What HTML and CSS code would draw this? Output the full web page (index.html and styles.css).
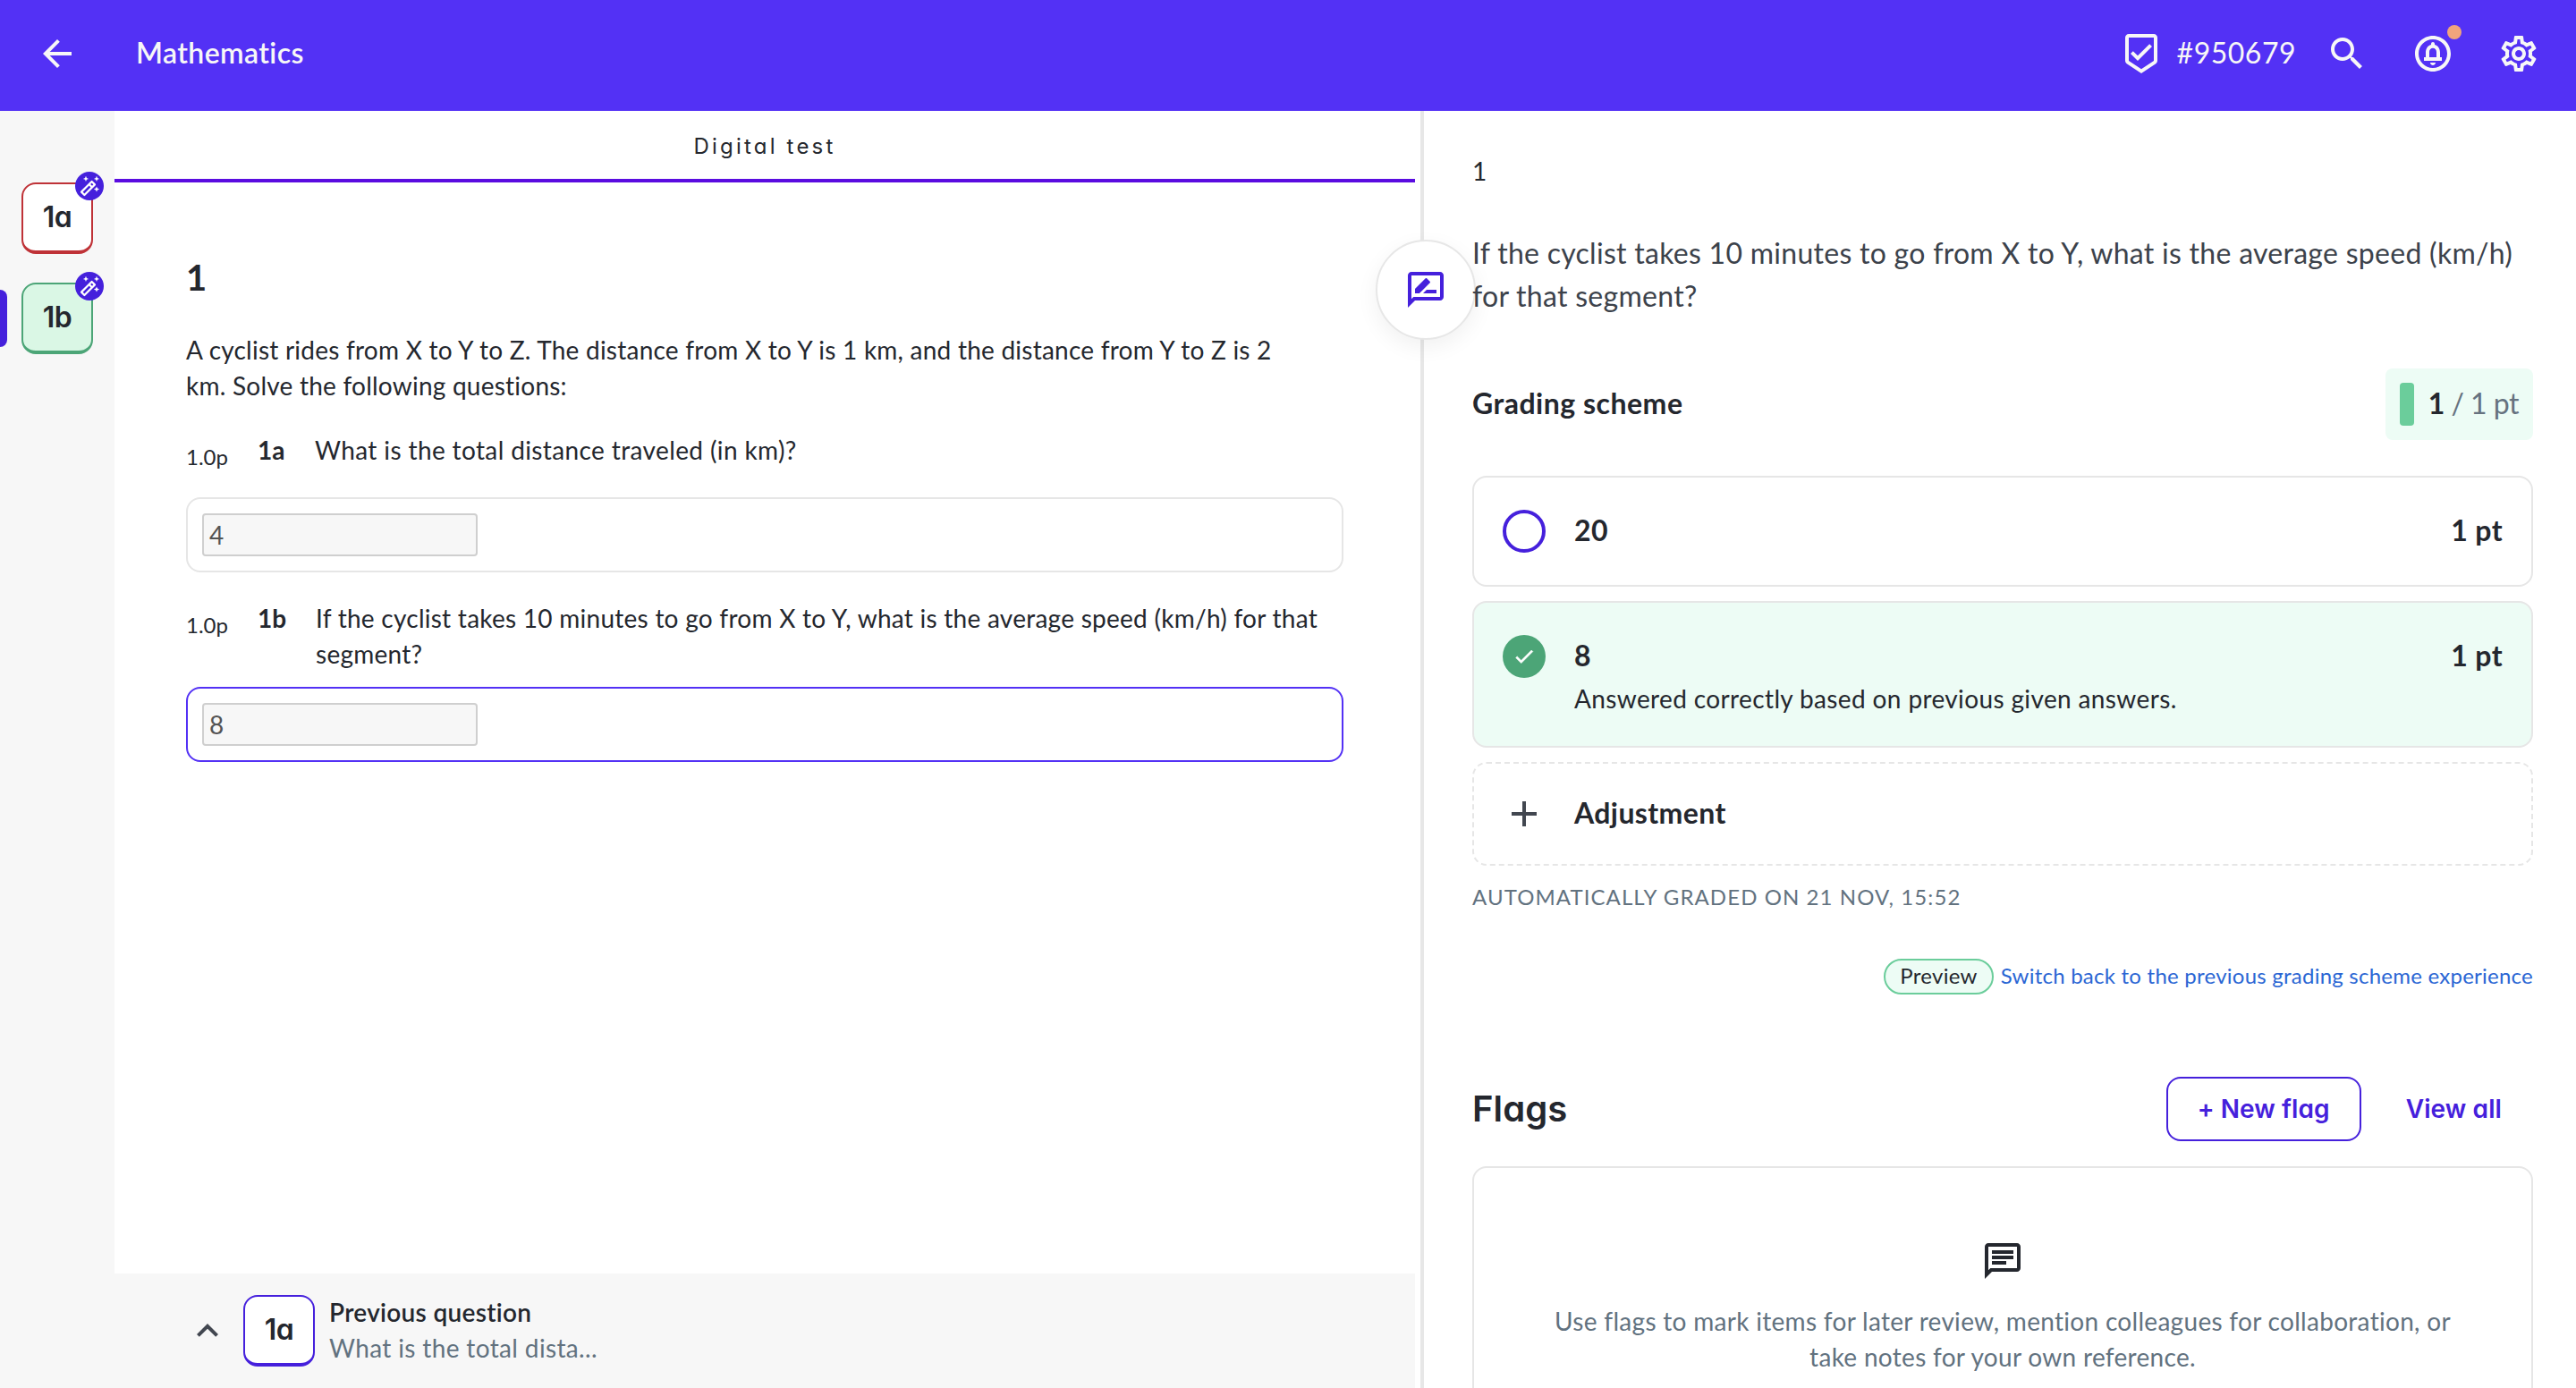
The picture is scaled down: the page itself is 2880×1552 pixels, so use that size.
FILE: index.html
```html
<!DOCTYPE html>
<html lang="en">
  <head>
    <title>Mathematics</title>
    <meta charset="utf-8">
    <link rel="stylesheet" href="styles.css">
  </head>
  <body>

  <svg class="sprite">
    <symbol id="wand" viewBox="0 0 32 32">
      <path fill="none" stroke="#fff" stroke-width="2.2" stroke-linejoin="round" d="M7 22.6 18.6 11l3.4 3.4L10.4 26zM15.6 14l3.4 3.4"/>
      <path fill="#fff" d="M12 4.8l.9 2.2 2.2.9-2.2.9-.9 2.2-.9-2.2-2.2-.9 2.2-.9zM24 4.8l.9 2.2 2.2.9-2.2.9-.9 2.2-.9-2.2-2.2-.9 2.2-.9zM24 16.4l.9 2.2 2.2.9-2.2.9-.9 2.2-.9-2.2-2.2-.9 2.2-.9z"/>
    </symbol>
  </svg>

  <header class="topbar">
    <svg class="icon" viewBox="0 0 24 24"><path d="M20 11H7.83l5.59-5.59L12 4l-8 8 8 8 1.41-1.41L7.83 13H20v-2z"/></svg>
    <div class="topbar-title">Mathematics</div>
    <div class="topbar-actions">
      <div class="student">
        <svg class="icon" viewBox="0 0 24 24"><path d="M19 1H5c-1.1 0-1.99.9-1.99 2L3 15.93c0 .69.35 1.3.88 1.66L12 23l8.11-5.41c.53-.36.88-.97.88-1.66L21 3c0-1.1-.9-2-2-2zm0 15-7 4.67L5 16V3h14v13zM10 13.17 7.41 10.59 6 12l4 4 8-8-1.42-1.42z"/></svg>
        <span>#950679</span>
      </div>
      <svg class="icon" viewBox="0 0 24 24"><path d="M15.5 14h-.79l-.28-.27C15.41 12.59 16 11.11 16 9.5 16 5.91 13.09 3 9.5 3S3 5.91 3 9.5 5.91 16 9.5 16c1.61 0 3.09-.59 4.23-1.57l.27.28v.79l5 4.99L20.49 19l-4.99-5zm-6 0C7.01 14 5 11.99 5 9.5S7.01 5 9.5 5 14 7.01 14 9.5 11.99 14 9.5 14z"/></svg>
      <div class="bell">
        <svg class="icon" viewBox="0 0 24 24"><path d="M12 18.5c.83 0 1.5-.67 1.5-1.5h-3c0 .83.67 1.5 1.5 1.5zM12 2C6.48 2 2 6.48 2 12s4.48 10 10 10 10-4.48 10-10S17.52 2 12 2zm0 18c-4.41 0-8-3.59-8-8s3.59-8 8-8 8 3.59 8 8-3.59 8-8 8zM16 11.39c0-2.11-1.03-3.92-3-4.39v-.5c0-.57-.43-1-1-1s-1 .43-1 1V7c-1.97.47-3 2.27-3 4.39V14H7v2h10v-2h-1v-2.61zM14 14h-4v-3c0-1.1.9-2.1 2-2.1s2 1 2 2.1v3z"/></svg>
        <span class="bell-dot"></span>
      </div>
      <svg class="icon" viewBox="0 0 24 24"><path d="M19.43 12.98c.04-.32.07-.64.07-.98 0-.34-.03-.66-.07-.98l2.11-1.65c.19-.15.24-.42.12-.64l-2-3.46c-.09-.16-.26-.25-.44-.25-.06 0-.12.01-.17.03l-2.49 1c-.52-.4-1.08-.73-1.69-.98l-.38-2.65C14.46 2.18 14.25 2 14 2h-4c-.25 0-.46.18-.49.42l-.38 2.65c-.61.25-1.17.59-1.69.98l-2.49-1c-.06-.02-.12-.03-.18-.03-.17 0-.34.09-.43.25l-2 3.46c-.13.22-.07.49.12.64l2.11 1.65c-.04.32-.07.65-.07.98 0 .33.03.66.07.98l-2.11 1.65c-.19.15-.24.42-.12.64l2 3.46c.09.16.26.25.44.25.06 0 .12-.01.17-.03l2.49-1c.52.4 1.08.73 1.69.98l.38 2.65c.03.24.24.42.49.42h4c.25 0 .46-.18.49-.42l.38-2.65c.61-.25 1.17-.59 1.69-.98l2.49 1c.06.02.12.03.18.03.17 0 .34-.09.43-.25l2-3.46c.12-.22.07-.49-.12-.64l-2.11-1.65zm-1.98-1.71c.04.31.05.52.05.73 0 .21-.02.43-.05.73l-.14 1.13.89.7 1.08.84-.7 1.21-1.27-.51-1.04-.42-.9.68c-.43.32-.84.56-1.25.73l-1.06.43-.16 1.13-.2 1.35h-1.4l-.19-1.35-.16-1.13-1.06-.43c-.43-.18-.83-.41-1.23-.71l-.91-.7-1.06.43-1.27.51-.7-1.21 1.08-.84.89-.7-.14-1.13c-.03-.31-.05-.54-.05-.74s.02-.43.05-.73l.14-1.13-.89-.7-1.08-.84.7-1.21 1.27.51 1.04.42.9-.68c.43-.32.84-.56 1.25-.73l1.06-.43.16-1.13.2-1.35h1.39l.19 1.35.16 1.13 1.06.43c.43.18.83.41 1.23.71l.91.7 1.06-.43 1.27-.51.7 1.21-1.07.85-.89.7.14 1.13zM12 8c-2.21 0-4 1.79-4 4s1.79 4 4 4 4-1.79 4-4-1.79-4-4-4zm0 6c-1.1 0-2-.9-2-2s.9-2 2-2 2 .9 2 2-.9 2-2 2z"/></svg>
    </div>
  </header>

  <div class="layout">
    <nav class="sidebar">
      <div class="nav-item">
        <div class="tile wrong">1a</div>
        <svg class="badge"><use href="#wand"/></svg>
      </div>
      <div class="nav-item active">
        <div class="tile correct">1b</div>
        <svg class="badge"><use href="#wand"/></svg>
      </div>
    </nav>

    <main class="test">
      <div class="tab">Digital test</div>
      <div class="exam">
        <h1>1</h1>
        <p class="intro">A cyclist rides from X to Y to Z. The distance from X to Y is 1 km, and the distance from Y to Z is 2 km. Solve the following questions:</p>

        <div class="question">
          <span class="points">1.0p</span>
          <b class="label">1a</b>
          <p class="text">What is the total distance traveled (in km)?</p>
        </div>
        <div class="answer first">
          <div class="field">4</div>
        </div>

        <div class="question second">
          <span class="points">1.0p</span>
          <b class="label">1b</b>
          <p class="text">If the cyclist takes 10 minutes to go from X to Y, what is the average speed (km/h) for that segment?</p>
        </div>
        <div class="answer current">
          <div class="field">8</div>
        </div>
      </div>

      <footer class="previous">
        <svg class="icon" viewBox="0 0 24 24"><path d="m12 8-6 6 1.41 1.41L12 10.83l4.59 4.58L18 14z"/></svg>
        <div class="tile">1a</div>
        <div>
          <div class="previous-title">Previous question</div>
          <div class="previous-text">What is the total dista...</div>
        </div>
      </footer>
    </main>

    <aside class="grading">
      <div class="feedback">
        <svg class="icon" viewBox="0 0 24 24"><path d="M20 2H4c-1.1 0-2 .9-2 2v18l4-4h14c1.1 0 2-.9 2-2V4c0-1.1-.9-2-2-2zm0 14H5.17L4 17.17V4h16v12zM10.5 14H18v-2h-5.5l-2 2zM6 14h2.47l5.88-5.88c.2-.2.2-.51 0-.71l-1.77-1.77c-.2-.2-.51-.2-.71 0L6 11.53V14z"/></svg>
      </div>

      <p class="number">1</p>
      <p class="prompt">If the cyclist takes 10 minutes to go from X to Y, what is the average speed (km/h) for that segment?</p>

      <div class="scheme-head">
        <h2>Grading scheme</h2>
        <div class="score"><span class="bar"></span><span><b>1</b> / 1 pt</span></div>
      </div>

      <div class="options">
        <div class="option">
          <span class="radio"></span>
          <div class="option-title">20</div>
          <div class="option-points">1 pt</div>
        </div>
        <div class="option selected">
          <span class="check">
            <svg viewBox="0 0 24 24"><path d="M9 16.17 4.83 12l-1.42 1.41L9 19 21 7l-1.41-1.41z"/></svg>
          </span>
          <div class="option-title">8
            <div class="option-note">Answered correctly based on previous given answers.</div>
          </div>
          <div class="option-points">1 pt</div>
        </div>
        <div class="option adjustment">
          <svg class="icon" viewBox="0 0 24 24"><path d="M19 13h-6v6h-2v-6H5v-2h6V5h2v6h6v2z"/></svg>
          <div class="option-title">Adjustment</div>
        </div>
      </div>

      <p class="graded">AUTOMATICALLY GRADED ON 21 NOV, 15:52</p>

      <div class="switch">
        <span class="pill">Preview</span>
        <a href="#">Switch back to the previous grading scheme experience</a>
      </div>

      <div class="flags-head">
        <h3>Flags</h3>
        <button class="btn outlined">+ New flag</button>
        <button class="btn">View all</button>
      </div>
      <div class="flags">
        <svg class="icon" viewBox="0 0 24 24"><path d="M4 4h16v12H5.17L4 17.17V4m0-2c-1.1 0-1.99.9-1.99 2L2 22l4-4h14c1.1 0 2-.9 2-2V4c0-1.1-.9-2-2-2H4zm2 10h8v2H6v-2zm0-3h12v2H6V9zm0-3h12v2H6V6z"/></svg>
        <p>Use flags to mark items for later review, mention colleagues for collaboration, or take notes for your own reference.</p>
      </div>
    </aside>
  </div>

  </body>
</html>
```
FILE: styles.css
```css
* {
  box-sizing: border-box;
}
html, body {
  height: 100%;
}
body {
  margin: 0;
  display: flex;
  flex-direction: column;
  overflow: hidden;
  background: #fff;
  color: #24272e;
  font: 28px/40px Lato, sans-serif;
  letter-spacing: 0.3px;
}
h1, h2, h3, p {
  margin: 0;
}
.sprite {
  display: none;
}
.icon {
  width: 48px;
  height: 48px;
  flex: none;
  fill: currentColor;
}

/* top bar */
.topbar {
  height: 124px;
  flex: none;
  padding: 0 40px 4px;
  display: flex;
  align-items: center;
  background: #5331f5;
  color: #f7f7f7;
  font-size: 32px;
}
.topbar-title {
  margin-left: 64px;
  padding-bottom: 2px;
  font-weight: 600;
  letter-spacing: 0.4px;
}
.topbar-actions {
  margin-left: auto;
  display: flex;
  gap: 48px;
}
.student {
  display: flex;
  align-items: center;
  gap: 16px;
  margin-right: -15px;
}
.student span {
  padding-bottom: 2px;
  letter-spacing: 0.5px;
}
.bell {
  position: relative;
  height: 48px;
}
.bell-dot {
  position: absolute;
  top: -8px;
  right: -8px;
  width: 16px;
  height: 16px;
  border-radius: 50%;
  background: #f1a47c;
}

.layout {
  flex: 1;
  min-height: 0;
  display: flex;
}

/* question navigation */
.sidebar {
  width: 128px;
  flex: none;
  padding: 80px 24px 0;
  display: flex;
  flex-direction: column;
  gap: 32px;
  background: #f7f7f7;
}
.nav-item {
  position: relative;
}
.tile {
  width: 80px;
  height: 80px;
  flex: none;
  border: 2px solid #4520dc;
  border-bottom-width: 4px;
  border-radius: 16px;
  background: #fff;
  font: 600 32px/74px Inter, sans-serif;
  font-feature-settings: "cv11";
  letter-spacing: -0.6px;
  text-align: center;
}
.tile.wrong {
  border-color: #bf3237;
}
.tile.correct {
  border-color: #4ca577;
  background: #daf7e5;
}
.badge {
  position: absolute;
  top: -12px;
  right: -12px;
  width: 32px;
  height: 32px;
  border-radius: 50%;
  background: #4520dc;
}
.nav-item.active::before {
  content: "";
  position: absolute;
  left: -24px;
  top: 8px;
  width: 8px;
  height: 64px;
  border-radius: 0 8px 8px 0;
  background: #4520dc;
}

/* test */
.test {
  width: 1454px;
  flex: none;
  display: flex;
  flex-direction: column;
}
.tab {
  height: 80px;
  border-bottom: 4px solid #5a0ce0;
  padding-top: 20px;
  text-align: center;
  font: 400 24px/40px Inter, sans-serif;
  font-feature-settings: "cv11";
  letter-spacing: 3.2px;
}
.exam {
  flex: 1;
  padding: 78px 80px 0;
}
h1 {
  font-size: 40px;
  line-height: 56px;
}
.intro {
  max-width: 1250px;
  margin-top: 33px;
  letter-spacing: 0.23px;
}
.question {
  display: flex;
  margin-top: 32px;
}
.question.second {
  margin-top: 31px;
}
.points {
  width: 80px;
  flex: none;
  padding-top: 12px;
  font-size: 24px;
  line-height: 32px;
  height: 40px;
  letter-spacing: 0;
}
.label {
  width: 64px;
  flex: none;
  letter-spacing: 0;
}
.text {
  letter-spacing: 0.38px;
}
.second .text {
  padding-left: 1px;
  letter-spacing: 0.26px;
}
.answer {
  height: 84px;
  margin-top: 17px;
  padding: 16px;
  border: 2px solid #e6e6e6;
  border-radius: 16px;
}
.answer.first {
  margin-top: 33px;
}
.answer.current {
  border-color: #5331f5;
}
.field {
  width: 308px;
  height: 48px;
  padding-left: 6px;
  border: 2px solid #cfcfcf;
  border-radius: 4px;
  background: #f7f7f7;
  color: #545454;
  line-height: 44px;
}
.previous {
  height: 128px;
  padding-left: 80px;
  display: flex;
  align-items: center;
  background: #f7f7f7;
}
.previous .icon {
  margin-right: 16px;
  color: #424750;
}
.previous .tile {
  margin-right: 16px;
}
.previous > div:last-child {
  padding-bottom: 2px;
}
.previous-title {
  font-weight: 600;
}
.previous-text {
  color: #62727f;
  letter-spacing: 0.36px;
}

/* grading panel */
.grading {
  position: relative;
  flex: 1;
  margin-left: 6px;
  padding: 46px 48px 0 54px;
  border-left: 4px solid #e7e7e7;
}
.feedback {
  position: absolute;
  left: -54px;
  top: 144px;
  width: 112px;
  height: 112px;
  padding: 30px;
  border: 2px solid #e7e7e7;
  border-radius: 50%;
  background: #fff;
  box-shadow: 0 8px 24px rgba(0,0,0,0.06);
  color: #4520dc;
}
.number {
  padding-top: 1px;
}
/* the text runs over the edge of the feedback button */
.prompt {
  position: relative;
  margin-top: 48px;
  color: #3c424b;
  font-size: 32px;
  line-height: 48px;
  letter-spacing: 0.28px;
}
.scheme-head {
  margin-top: 57px;
  display: flex;
  align-items: center;
  justify-content: space-between;
}
h2 {
  padding-bottom: 3px;
  font-size: 32px;
  letter-spacing: 0.5px;
}
.score {
  height: 80px;
  padding: 0 16px;
  display: flex;
  align-items: center;
  gap: 16px;
  border-radius: 8px;
  background: #edfcf5;
  color: #66727f;
  font-size: 32px;
}
.score > span:last-child {
  padding-bottom: 3px;
  letter-spacing: -0.5px;
}
.score b {
  color: #24272e;
}
.bar {
  width: 16px;
  height: 48px;
  border-radius: 4px;
  background: #6bcd9b;
}
.options {
  margin-top: 40px;
  display: flex;
  flex-direction: column;
  gap: 16px;
}
.option {
  min-height: 124px;
  padding: 35px 32px 33px;
  display: flex;
  gap: 32px;
  border: 2px solid #e6e6e6;
  border-radius: 16px;
  font-size: 32px;
  font-weight: 700;
  line-height: 48px;
  letter-spacing: 0.4px;
}
.option.selected {
  background: #edfcf5;
}
.option.adjustment {
  min-height: 116px;
  padding: 31px 32px 29px;
  border-style: dashed;
}
.option .icon {
  margin-top: 1px;
  color: #424750;
}
.option-title {
  flex: 1;
}
.option-note {
  margin-top: 4px;
  font-size: 28px;
  font-weight: 400;
  line-height: 40px;
  letter-spacing: 0.37px;
}
.radio, .check {
  width: 48px;
  height: 48px;
  flex: none;
  margin-top: 1px;
  border-radius: 50%;
}
.radio {
  border: 4px solid #4520dc;
}
.check {
  padding: 11px;
  background: #4ca577;
}
.check svg {
  display: block;
  width: 26px;
  height: 26px;
  fill: #fff;
  stroke: #fff;
  stroke-width: 0.6px;
}
.graded {
  margin-top: 19px;
  color: #62727f;
  font-size: 24px;
  line-height: 32px;
  letter-spacing: 1.08px;
}
.switch {
  height: 40px;
  margin-top: 53px;
  display: flex;
  align-items: center;
  justify-content: flex-end;
  gap: 8px;
  font-size: 24px;
}
.pill {
  height: 40px;
  padding: 0 16px;
  border: 2px solid #6bcd9b;
  border-radius: 20px;
  background: #edfcf5;
  line-height: 34px;
}
.switch a {
  padding-bottom: 2px;
  color: #2a66d4;
  letter-spacing: 0.24px;
  text-decoration: none;
}
.flags-head {
  margin-top: 92px;
  display: flex;
  align-items: center;
}
h3 {
  margin-right: auto;
  font: 600 40px/56px Inter, sans-serif;
  font-feature-settings: "cv11";
  letter-spacing: 0.1px;
}
.btn {
  height: 72px;
  padding: 0 33px 1px;
  border: 2px solid transparent;
  border-radius: 16px;
  background: none;
  color: #4520dc;
  font: 600 28px/40px Inter, sans-serif;
  font-feature-settings: "cv11";
  letter-spacing: 0.1px;
}
.btn.outlined {
  border-color: #4520dc;
  margin-right: 15px;
}
.flags {
  height: 320px;
  margin-top: 28px;
  padding: 80px 80px 0;
  border: 2px solid #e6e6e6;
  border-radius: 16px;
  color: #62727f;
  text-align: center;
}
.flags .icon {
  display: block;
  margin: 0 auto 23px;
  color: #24272e;
}
```
